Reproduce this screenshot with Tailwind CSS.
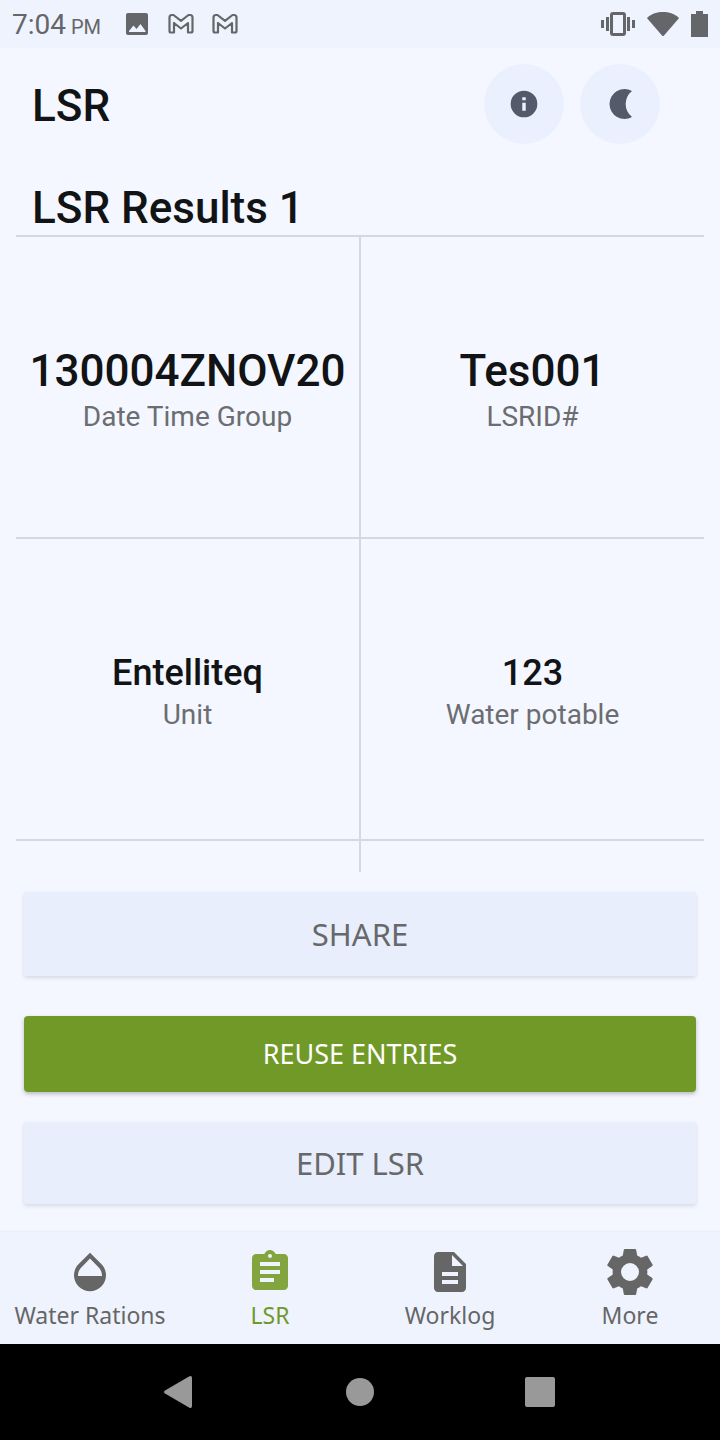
<!DOCTYPE html>
<html lang="en">
<head>
  <meta charset="UTF-8" />
  <meta name="viewport" content="width=device-width, initial-scale=1.0" />
  <title>LSR Results</title>
  <script src="https://cdn.jsdelivr.net/npm/@tailwindcss/browser@4"></script>
</head>
<body class="bg-[#f4f7ff] text-[#111315] font-['Roboto',sans-serif]">
  <div class="h-screen flex flex-col">

    <!-- Status bar -->
    <div class="h-12 shrink-0 bg-[#eff3fe] text-[#646669] flex items-center justify-between pl-3 pr-2">
      <div class="flex items-center">
        <span class="text-[28px] leading-8 pt-1">7:04 <span class="text-[20px] -ml-0.5">PM</span></span>
        <svg class="w-6 h-6 ml-6" viewBox="0 0 24 24" fill="currentColor"><path d="M3 1h18a2 2 0 0 1 2 2v18a2 2 0 0 1-2 2H3a2 2 0 0 1-2-2V3a2 2 0 0 1 2-2z" /><path d="M4 20v-1l4.500-5.500 3 3.500 4-5 5 7v1z" fill="#eff3fe" /></svg>
        <svg class="w-7 h-6 ml-[18px]" viewBox="0 0 28 24" fill="none" stroke="currentColor" stroke-width="2.200" stroke-linejoin="round"><path d="M2.500 5.500Q2.500 3 5 3h1.500L14 8.800 21.500 3H23q2.500 0 2.500 2.500V19q0 1.500-1.500 1.500h-3V11L14 16.500 7 11v9.500H4q-1.500 0-1.500-1.500z" /></svg>
        <svg class="w-7 h-6 ml-4" viewBox="0 0 28 24" fill="none" stroke="currentColor" stroke-width="2.200" stroke-linejoin="round"><path d="M2.500 5.500Q2.500 3 5 3h1.500L14 8.800 21.500 3H23q2.500 0 2.500 2.500V19q0 1.500-1.500 1.500h-3V11L14 16.500 7 11v9.500H4q-1.500 0-1.500-1.500z" /></svg>
      </div>
      <div class="flex items-center">
        <svg class="w-[34px] h-6" viewBox="0 0 34 24" fill="currentColor"><path d="M0 8h3v8H0zM5 5h3v14H5zM26 5h3v14h-3zM31 8h3v8h-3z" /><rect x="10.500" y="1.500" width="13" height="21" rx="1.500" fill="none" stroke="currentColor" stroke-width="3" /></svg>
        <svg class="w-8 h-6 ml-3" viewBox="0 0 32 24" fill="currentColor"><path d="M.5 5.500C5 1.500 10 0 16 0s11 1.500 15.500 5.500q.6.600 0 1.300L17 23.500q-1 1-2 0L.5 6.800q-.6-.7 0-1.300z" /></svg>
        <svg class="w-[17px] h-[26px] ml-3 mr-1" viewBox="0 0 17 26" fill="currentColor"><path d="M5 0h7v3h5v23H0V3h5z" /></svg>
      </div>
    </div>

    <!-- Header -->
    <header class="shrink-0 flex items-center justify-between pl-8 pr-[60px] py-4">
      <h1 class="pt-1 text-[44px] leading-[52px] font-medium">LSR</h1>
      <div class="flex gap-4">
        <button type="button" aria-label="Info" class="w-20 h-20 rounded-full bg-[#eaf0fe] text-[#555a6a] flex items-center justify-center">
          <svg class="w-8 h-8" viewBox="0 0 24 24" fill="currentColor"><path d="M12 2a10 10 0 1 0 0 20 10 10 0 0 0 0-20zm1.300 15h-2.600v-6h2.600zm0-7.800h-2.600V7h2.600z" /></svg>
        </button>
        <button type="button" aria-label="Dark mode" class="w-20 h-20 rounded-full bg-[#eaf0fe] text-[#555a6a] flex items-center justify-center">
          <svg class="w-8 h-8" viewBox="0 0 32 32" fill="currentColor"><path d="M28 3A15 15 0 1 0 28 29A16.500 16.500 0 0 1 28 3z" /></svg>
        </button>
      </div>
    </header>

    <!-- Results -->
    <main class="flex-1 min-h-0 flex flex-col px-4 pt-[22px]">
      <h2 class="shrink-0 px-4 text-[44px] leading-[53px] font-medium">LSR Results 1</h2>
      <dl class="flex-1 min-h-0 overflow-hidden grid grid-cols-[345fr_343fr] auto-rows-[302px] text-center">
        <div class="flex flex-col justify-center pt-[6px] border-t-2 border-r-2 border-[#d5d8e1]">
          <dt class="order-2 text-[28px] leading-[38px] text-[#6b6d70]">Date Time Group</dt>
          <dd class="text-[44px] leading-[54px] font-medium whitespace-nowrap">130004ZNOV20</dd>
        </div>
        <div class="flex flex-col justify-center pt-[6px] border-t-2 border-[#d5d8e1]">
          <dt class="order-2 text-[28px] leading-[38px] text-[#6b6d70]">LSRID#</dt>
          <dd class="text-[44px] leading-[54px] font-medium">Tes001</dd>
        </div>
        <div class="flex flex-col justify-center pt-[6px] border-t-2 border-r-2 border-[#d5d8e1]">
          <dt class="order-2 text-[28px] leading-[38px] text-[#6b6d70]">Unit</dt>
          <dd class="text-[36px] leading-[46px] font-medium">Entelliteq</dd>
        </div>
        <div class="flex flex-col justify-center pt-[6px] border-t-2 border-[#d5d8e1]">
          <dt class="order-2 text-[28px] leading-[38px] text-[#6b6d70]">Water potable</dt>
          <dd class="text-[36px] leading-[46px] font-medium">123</dd>
        </div>
        <div class="border-t-2 border-r-2 border-[#d5d8e1]"></div>
        <div class="border-t-2 border-[#d5d8e1]"></div>
      </dl>
    </main>

    <!-- Actions -->
    <div class="shrink-0 flex flex-col px-6 pt-5 pb-7 font-['Noto_Sans',sans-serif]">
      <button type="button" class="h-[84px] rounded-xs bg-[#e8eefb] text-[#66686a] text-[31px] shadow-[0_2px_4px_rgba(0,0,0,0.12)]">SHARE</button>
      <button type="button" class="mt-10 h-[76px] rounded-sm bg-[#719928] text-white text-[27px] shadow-[0_2px_4px_rgba(0,0,0,0.25)]">REUSE ENTRIES</button>
      <button type="button" class="mt-[30px] h-[82px] rounded-xs bg-[#e8eefb] text-[#66686a] text-[31px] shadow-[0_2px_4px_rgba(0,0,0,0.12)]">EDIT LSR</button>
    </div>

    <!-- Tabs -->
    <nav class="h-28 shrink-0 grid grid-cols-4 pt-4 bg-[#eff3fe] text-[#666666] text-[23px] leading-[38px] whitespace-nowrap font-['Noto_Sans',sans-serif] shadow-[0_-1px_2px_rgba(0,0,0,0.05)]">
      <a href="#water" class="flex flex-col items-center">
        <svg class="w-12 h-12" viewBox="0 0 24 24" fill="currentColor"><path d="M17.660 8L12 2.350 6.340 8C4.780 9.560 4 11.640 4 13.640s.78 4.110 2.340 5.670 3.610 2.350 5.660 2.350 4.100-.79 5.660-2.350S20 15.640 20 13.640 19.220 9.560 17.660 8zM6 14c.01-2 .62-3.270 1.760-4.400L12 5.270l4.240 4.380C17.380 10.770 17.990 12 18 14H6z" /></svg>
        Water Rations
      </a>
      <a href="#lsr" class="flex flex-col items-center text-[#719928]">
        <svg class="w-12 h-12 text-[#82a540]" viewBox="0 0 24 24" fill="currentColor"><path d="M19 3h-4.180C14.400 1.840 13.300 1 12 1c-1.300 0-2.400.84-2.820 2H5c-1.100 0-2 .9-2 2v14c0 1.100.9 2 2 2h14c1.100 0 2-.9 2-2V5c0-1.100-.9-2-2-2zm-7 0c.55 0 1 .45 1 1s-.45 1-1 1-1-.45-1-1 .45-1 1-1zm2 14H7v-2h7v2zm3-4H7v-2h10v2zm0-4H7V7h10v2z" /></svg>
        LSR
      </a>
      <a href="#worklog" class="flex flex-col items-center">
        <svg class="w-12 h-12" viewBox="0 0 24 24" fill="currentColor"><path d="M14 2H6c-1.100 0-1.990.9-1.990 2L4 20c0 1.100.89 2 1.990 2H18c1.100 0 2-.9 2-2V8l-6-6zm2 16H8v-2h8v2zm0-4H8v-2h8v2zm-3-5V3.500L18.500 9H13z" /></svg>
        Worklog
      </a>
      <a href="#more" class="flex flex-col items-center">
        <svg class="w-12 h-12" viewBox="0 0 48 48" fill="currentColor" fill-rule="evenodd"><path d="M19 1h10q1 0 1.200 1l1 5.500q2 .9 3.800 2.200l5.200-2q1-.3 1.500.5l4.800 8.300q.5.900-.3 1.500L41.200 21.600q.3 2.400 0 4.800L46.200 30q.8.600.3 1.500l-4.800 8.300q-.5.800-1.500.5l-5.200-2q-1.800 1.300-3.800 2.200l-1 5.500q-.2 1-1.200 1H19q-1 0-1.200-1l-1-5.500q-2-.9-3.800-2.200l-5.200 2q-1 .3-1.500-.5L1.500 31.500q-.5-.9.3-1.500L6.800 26.400q-.3-2.400 0-4.800L1.800 18q-.8-.6-.3-1.500l4.800-8.300q.5-.8 1.500-.5l5.200 2q1.800-1.300 3.800-2.200l1-5.500q.2-1 1.200-1zM24 15a9 9 0 1 0 0 18 9 9 0 0 0 0-18z" /></svg>
        More
      </a>
    </nav>

    <!-- System navigation -->
    <div class="h-24 shrink-0 bg-black text-[#999999] grid grid-cols-3 px-[12.5%]">
      <button type="button" aria-label="Back" class="flex items-center justify-center">
        <svg class="w-8 h-8" viewBox="0 0 32 32" fill="currentColor"><path d="M1 14.500L25 .5q3-1.500 3 1.500v28q0 3-3 1.500L1 17.500q-2-1.500 0-3z" /></svg>
      </button>
      <button type="button" aria-label="Home" class="flex items-center justify-center">
        <span class="w-7 h-7 rounded-full bg-[#999999]"></span>
      </button>
      <button type="button" aria-label="Recents" class="flex items-center justify-center">
        <span class="w-[30px] h-[30px] rounded-xs bg-[#999999]"></span>
      </button>
    </div>
  </div>
</body>
</html>
